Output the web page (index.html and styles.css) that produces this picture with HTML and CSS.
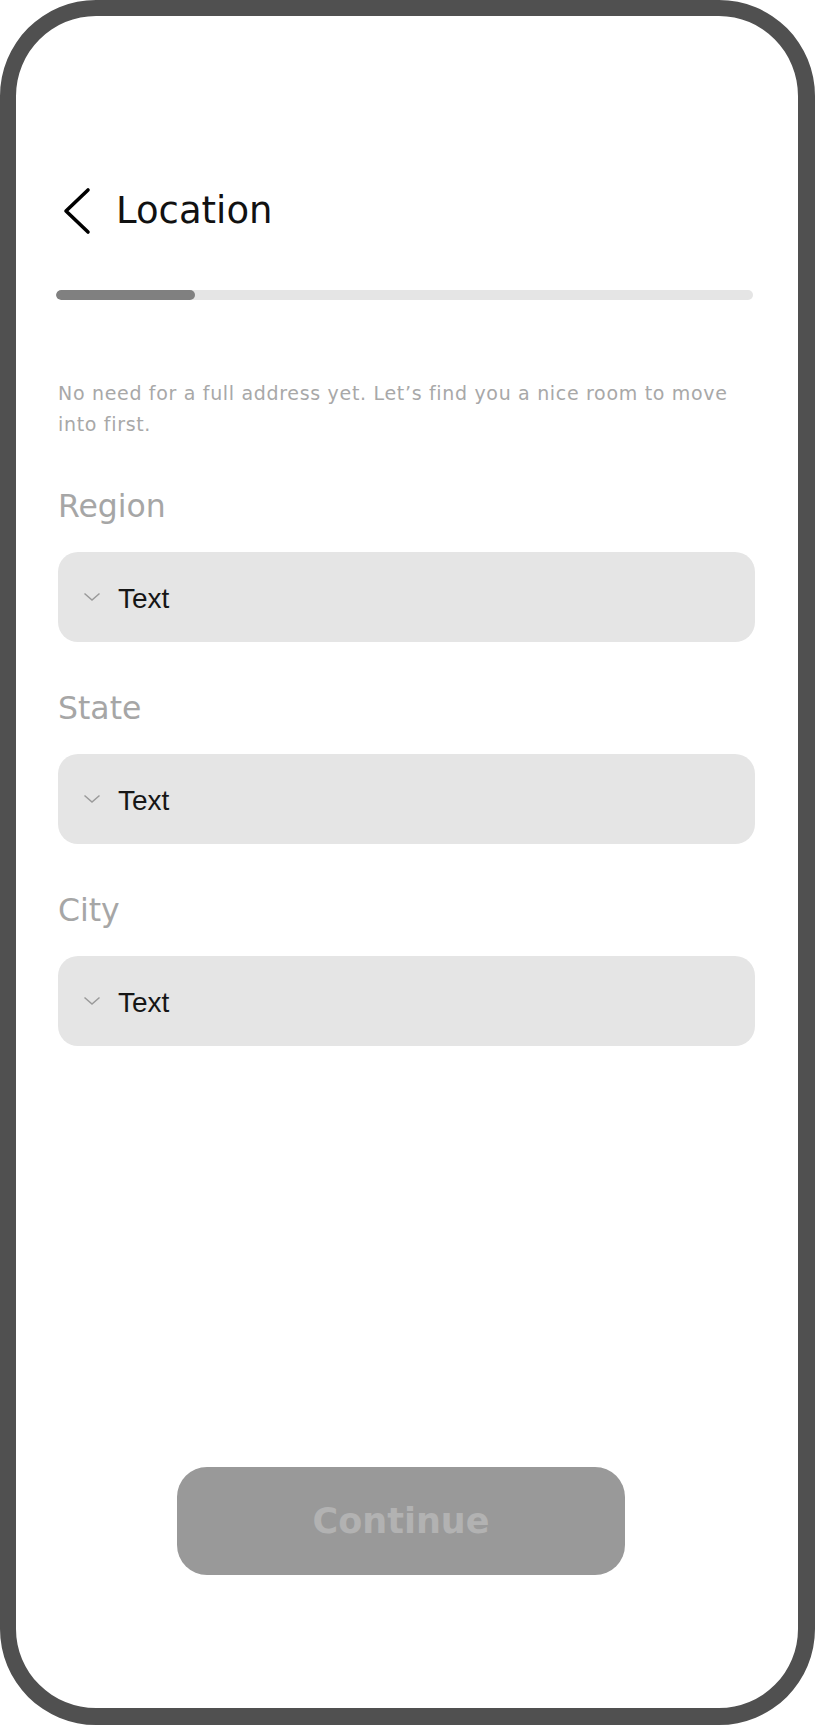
FILE: index.html
```html
<!DOCTYPE html>
<html lang="en">
<head>
<meta charset="utf-8">
<title>Location</title>
<link rel="stylesheet" href="styles.css">
</head>
<body>
<div class="phone">
  <div class="content">
    <header class="header">
      <svg class="back" width="30" height="48" viewBox="0 0 30 48" aria-hidden="true">
        <polyline points="26,3 4,24 26,45" fill="none" stroke="#000" stroke-width="3.6" stroke-linecap="round" stroke-linejoin="round"/>
      </svg>
      <h1 class="title">Location</h1>
    </header>
    <div class="progress"><div class="progress-fill" style="width:20%"></div></div>
    <p class="intro">No need for a full address yet. Let’s find you a nice room to move into first.</p>

    <div class="field">
      <div class="label">Region</div>
      <div class="select">
        <svg class="caret" width="18" height="10" viewBox="0 0 18 10" aria-hidden="true"><polyline points="1.5,1.5 9,8 16.5,1.5" fill="none" stroke="#9a9a9a" stroke-width="1.5"/></svg>
        <span class="select-text">Text</span>
      </div>
    </div>
    <div class="field">
      <div class="label">State</div>
      <div class="select">
        <svg class="caret" width="18" height="10" viewBox="0 0 18 10" aria-hidden="true"><polyline points="1.5,1.5 9,8 16.5,1.5" fill="none" stroke="#9a9a9a" stroke-width="1.5"/></svg>
        <span class="select-text">Text</span>
      </div>
    </div>
    <div class="field">
      <div class="label">City</div>
      <div class="select">
        <svg class="caret" width="18" height="10" viewBox="0 0 18 10" aria-hidden="true"><polyline points="1.5,1.5 9,8 16.5,1.5" fill="none" stroke="#9a9a9a" stroke-width="1.5"/></svg>
        <span class="select-text">Text</span>
      </div>
    </div>

    <button class="continue" type="button">Continue</button>
  </div>
</div>
</body>
</html>
```

FILE: styles.css
```css
html, body {
  margin: 0;
  padding: 0;
  background: #ffffff;
}

.phone {
  box-sizing: border-box;
  width: 815px;
  height: 1725px;
  border: 16px solid #505050;
  border-right-width: 17px;
  border-bottom-width: 17px;
  border-radius: 96px;
  background: #ffffff;
  overflow: hidden;
}

.content {
  box-sizing: border-box;
  height: 100%;
  display: flex;
  flex-direction: column;
  padding: 166px 43px 133px 42px;
  font-family: "DejaVu Sans", "Liberation Sans", sans-serif;
}

.header {
  display: flex;
  align-items: center;
  height: 58px;
  padding-left: 4px;
  gap: 24px;
}

.back {
  display: block;
  flex: none;
}

.title {
  margin: 0;
  font-size: 37px;
  font-weight: 400;
  color: #111111;
  line-height: 58px;
}

.progress {
  margin-top: 50px;
  margin-left: -2px;
  width: 697px;
  height: 10px;
  border-radius: 5px;
  background: #e5e5e5;
  overflow: hidden;
}

.progress-fill {
  height: 100%;
  background: #808080;
  border-radius: 5px;
}

.intro {
  margin: 78px 0 0 0;
  width: 690px;
  font-size: 19px;
  letter-spacing: 0.68px;
  line-height: 31px;
  font-weight: 400;
  color: #a8a8a8;
}

.field {
  display: flex;
  flex-direction: column;
}

.label {
  margin-top: 46px;
  font-size: 31.5px;
  line-height: 40px;
  font-weight: 400;
  color: #a6a6a6;
}

.select {
  margin-top: 26px;
  height: 90px;
  border-radius: 20px;
  background: #e5e5e5;
  display: flex;
  align-items: center;
  padding-left: 25px;
  gap: 17px;
}

.caret {
  display: block;
  flex: none;
}

.select-text {
  font-family: "Liberation Sans", Arial, sans-serif;
  font-size: 28px;
  line-height: 32px;
  padding-top: 3px;
  color: #161616;
}

.continue {
  margin-top: auto;
  margin-left: 119px;
  width: 448px;
  height: 108px;
  border: none;
  border-radius: 30px;
  background: #999999;
  color: #b2b2b2;
  font-family: "DejaVu Sans", "Liberation Sans", sans-serif;
  font-size: 35px;
  font-weight: 700;
  padding: 0;
}
```
